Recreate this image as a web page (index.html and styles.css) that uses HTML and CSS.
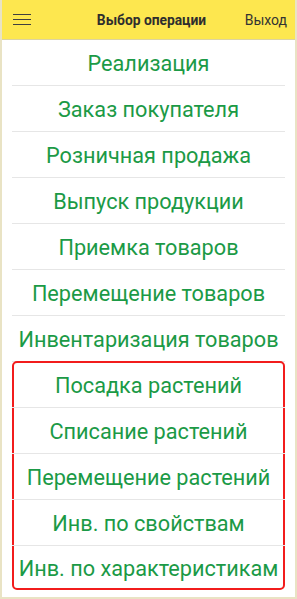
FILE: index.html
```html
<!DOCTYPE html>
<html lang="ru">
<head>
    <meta charset="UTF-8">
    <meta name="viewport" content="width=device-width, initial-scale=1.0">
    <title>Выбор операции</title>
    <link rel="stylesheet" href="styles.css">
</head>
<body>
    <div class="screen">
        <div class="header">
            <div class="menu-btn">
                <span></span><span></span><span></span>
            </div>
            <div class="title">Выбор операции</div>
            <div class="exit">Выход</div>
        </div>

        <div class="list">
            <div class="item">Реализация</div>
            <div class="item">Заказ покупателя</div>
            <div class="item">Розничная продажа</div>
            <div class="item">Выпуск продукции</div>
            <div class="item">Приемка товаров</div>
            <div class="item">Перемещение товаров</div>
            <div class="item">Инвентаризация товаров</div>
            <div class="group">
                <div class="item">Посадка растений</div>
                <div class="item">Списание растений</div>
                <div class="item">Перемещение растений</div>
                <div class="item">Инв. по свойствам</div>
                <div class="item">Инв. по характеристикам</div>
            </div>
        </div>
    </div>
</body>
</html>
```

FILE: styles.css
```css
html, body {
    margin: 0;
    padding: 0;
}
body {
    font-family: Roboto, "Noto Sans", sans-serif;
    background: #e9e3c4;
}
.screen {
    width: 293px;
    height: 597px;
    margin: 0 2px;
    background: #fff;
    display: flex;
    flex-direction: column;
}
.header {
    height: 39px;
    background: #fde74f;
    border-bottom: 1px solid #dcd3a0;
    display: grid;
    grid-template-columns: 1fr auto 1fr;
    align-items: center;
    padding: 0 8px 0 11px;
}
.menu-btn {
    width: 18px;
    display: flex;
    flex-direction: column;
    gap: 3.7px;
}
.menu-btn span {
    display: block;
    height: 1.4px;
    background: #3f3f3f;
}
.title {
    text-align: center;
    font-weight: bold;
    font-size: 13.8px;
    color: #2e2e2e;
    margin-left: 3px;
}
.exit {
    justify-self: end;
    font-size: 14px;
    color: #333;
}
.list {
    padding: 0 10px;
}
.item {
    height: 46px;
    box-sizing: border-box;
    padding-top: 3px;
    line-height: 42px;
    text-align: center;
    font-size: 21.7px;
    color: #1b9a46;
    border-bottom: 1px solid #e6e6e6;
    white-space: nowrap;
}
.group {
    border: 2px solid #f21c1c;
    border-radius: 5px;
    margin-top: -1px;
}
.group .item {
    margin: 0 -2px;
}
.group .item:first-child {
    height: 45px;
    padding-top: 2px;
}
.group .item:last-child {
    height: 42px;
    padding-top: 2px;
    border-bottom: none;
}
```
